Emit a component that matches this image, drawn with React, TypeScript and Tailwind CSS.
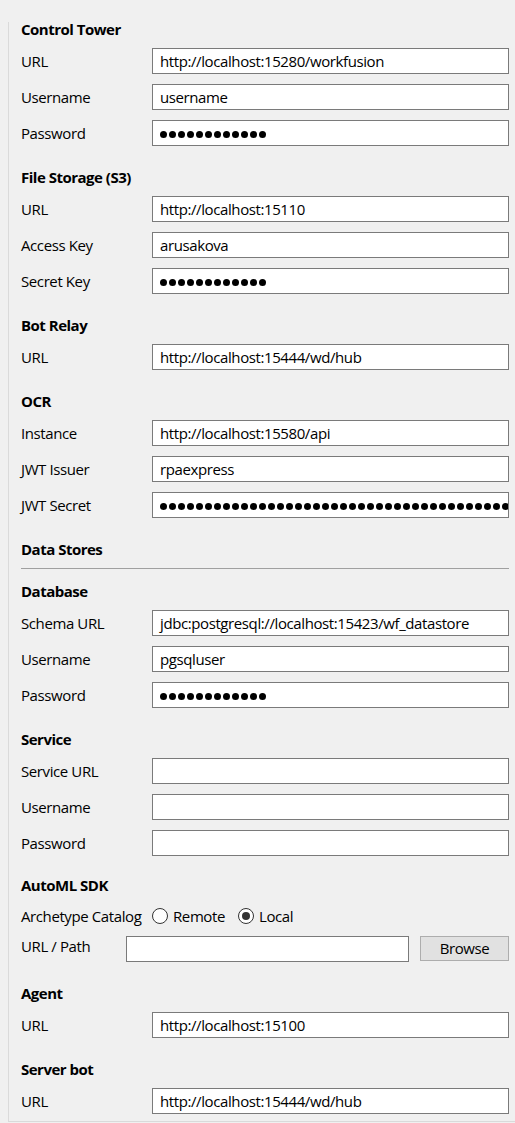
import React from "react";

type Field = { label: string; value?: string; secret?: number };
type Section = { title: string; fields?: Field[] };

const font = { fontFamily: '"Open Sans", "Noto Sans", Arial, sans-serif' };

function Heading({ title, first }: { title: string; first?: boolean }) {
  return (
    <div className={`h-[20px] leading-[20px] font-bold text-[15px] tracking-[-0.5px] text-black ${first ? "-mt-[3px]" : ""}`}>
      {title}
    </div>
  );
}

// masked value: a run of filled circles, clipped by the box
function Dots({ count }: { count: number }) {
  return (
    <div className="flex gap-[2px] mt-[2px]">
      {Array.from({ length: count }).map((_, i) => (
        <div key={i} className="w-[7px] h-[7px] shrink-0 rounded-full bg-black" />
      ))}
    </div>
  );
}

function TextBox({ value, secret, className }: { value?: string; secret?: number; className?: string }) {
  return (
    <div
      className={`h-[26px] bg-white border border-[#7a7a7a] pl-[7px] pr-[2px] flex items-center overflow-hidden whitespace-nowrap text-[15px] tracking-[-0.4px] text-black ${className ?? ""}`}
    >
      {secret ? <Dots count={secret} /> : value}
    </div>
  );
}

function Row({ f }: { f: Field }) {
  return (
    <div className="flex items-center h-[26px]">
      <div className="w-[131px] shrink-0 text-[15px] tracking-[-0.4px] text-black">{f.label}</div>
      <TextBox value={f.value} secret={f.secret} className="flex-1" />
    </div>
  );
}

function Block({ s, first }: { s: Section; first?: boolean }) {
  return (
    <div className="flex flex-col gap-[9px]">
      <Heading title={s.title} first={first} />
      <div className="flex flex-col gap-[10px]">
        {s.fields?.map((f) => <Row key={f.label} f={f} />)}
      </div>
    </div>
  );
}

function Radio({ checked, label }: { checked?: boolean; label: string }) {
  return (
    <div className="flex items-center gap-[5px]">
      <div className="w-[16px] h-[16px] rounded-full border border-[#333] bg-white flex items-center justify-center">
        {checked && <div className="w-[8px] h-[8px] rounded-full bg-[#333]" />}
      </div>
      <span>{label}</span>
    </div>
  );
}

export default function App() {
  const top: Section[] = [
    {
      title: "Control Tower",
      fields: [
        { label: "URL", value: "http://localhost:15280/workfusion" },
        { label: "Username", value: "username" },
        { label: "Password", secret: 12 },
      ],
    },
    {
      title: "File Storage (S3)",
      fields: [
        { label: "URL", value: "http://localhost:15110" },
        { label: "Access Key", value: "arusakova" },
        { label: "Secret Key", secret: 12 },
      ],
    },
    { title: "Bot Relay", fields: [{ label: "URL", value: "http://localhost:15444/wd/hub" }] },
    {
      title: "OCR",
      fields: [
        { label: "Instance", value: "http://localhost:15580/api" },
        { label: "JWT Issuer", value: "rpaexpress" },
        { label: "JWT Secret", secret: 60 },
      ],
    },
  ];

  const stores: Section[] = [
    {
      title: "Database",
      fields: [
        { label: "Schema URL", value: "jdbc:postgresql://localhost:15423/wf_datastore" },
        { label: "Username", value: "pgsqluser" },
        { label: "Password", secret: 12 },
      ],
    },
    {
      title: "Service",
      fields: [
        { label: "Service URL", value: "" },
        { label: "Username", value: "" },
        { label: "Password", value: "" },
      ],
    },
  ];

  const tail: Section[] = [
    { title: "Agent", fields: [{ label: "URL", value: "http://localhost:15100" }] },
    { title: "Server bot", fields: [{ label: "URL", value: "http://localhost:15444/wd/hub" }] },
  ];

  return (
    <div className="w-[515px] h-[1123px] bg-[#f0f0f0] overflow-hidden text-black" style={font}>
      <div className="ml-[8px] mt-[22px] border-l border-b border-[#dadada] pl-[12px] pr-[6px] pb-[7px] flex flex-col gap-[21px] text-[15px] tracking-[-0.4px]">
        {top.map((s, i) => (
          <Block key={s.title} s={s} first={i === 0} />
        ))}

        <div className="flex flex-col">
          <Heading title="Data Stores" />
          <div className="h-px bg-[#a0a0a0] mt-[9px] mb-[12px]" />
          <div className="flex flex-col gap-[21px]">
            {stores.map((s) => (
              <Block key={s.title} s={s} />
            ))}
          </div>
        </div>

        <div className="flex flex-col -mt-[2px]">
          <Heading title="AutoML SDK" />
          <div className="flex items-center h-[20px] mt-[11px]">
            <span className="w-[131px] shrink-0">Archetype Catalog</span>
            <Radio label="Remote" />
            <div className="w-[13px]" />
            <Radio checked label="Local" />
          </div>
          <div className="flex items-start mt-[10px]">
            <div className="w-[105px] shrink-0 leading-[20px]">URL / Path</div>
            <TextBox className="w-[283px] h-[25px]" />
            <button className="ml-[11px] w-[89px] h-[25px] bg-[#e1e1e1] border border-[#adadad] text-[15px] text-black">
              Browse
            </button>
          </div>
        </div>

        {tail.map((s) => (
          <Block key={s.title} s={s} />
        ))}
      </div>
    </div>
  );
}
